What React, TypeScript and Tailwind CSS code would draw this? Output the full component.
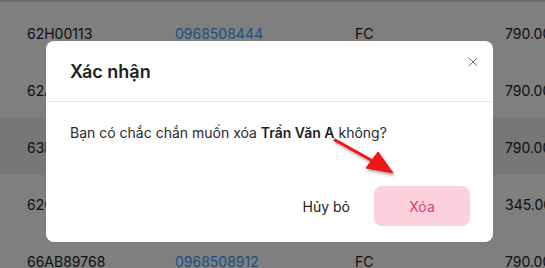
import React from 'react';
import { X } from 'lucide-react';

type Row = { plate: string; phone: string; type: string; amount: string };

const rows: Row[] = [
    { plate: '62H00113', phone: '0968508444', type: 'FC', amount: '790.000' },
    { plate: '62A12345', phone: '0968508555', type: 'FC', amount: '790.000' },
    { plate: '63B45678', phone: '0968508666', type: 'FC', amount: '790.000' },
    { plate: '62C98765', phone: '0968508777', type: 'PL', amount: '345.000' },
    { plate: '66AB89768', phone: '0968508912', type: 'FC', amount: '790.000' }
];

const App: React.FC = () => {
    return (
        <div
            className="relative h-[268px] w-[545px] overflow-hidden bg-white text-[14px] text-[#222]"
            style={{ fontFamily: 'Inter, "Noto Sans", sans-serif' }}
        >
            {/* Table behind the dialog */}
            <div className="h-[2px] bg-[#d9dbef]" />
            <div className="h-[2px]" />
            {rows.map((r, i) => (
                <div
                    key={r.plate}
                    className={`flex h-[57px] items-center pt-[2px] ${i === 2 ? 'bg-[#eeeeee]' : 'bg-white'}`}
                >
                    <div className="w-[175px] shrink-0 pl-[27px]">{r.plate}</div>
                    <div className="w-[180px] shrink-0 text-[#3d9fff]">{r.phone}</div>
                    <div className="w-[150px] shrink-0">{r.type}</div>
                    <div className="shrink-0 whitespace-nowrap">{r.amount}</div>
                </div>
            ))}

            {/* Backdrop + dialog */}
            <div className="absolute inset-0 bg-black/50 pl-[46px] pt-[41px]">
                <div className="flex h-[201px] w-[447px] flex-col rounded-lg bg-white">
                    <div className="flex h-[61px] items-center justify-between border-b border-[#e8e8e8] pl-6 pr-[10px]">
                        <span className="text-[18px] font-semibold text-[#1f1f1f]">Xác nhận</span>
                        <button className="-mt-[19px] flex h-5 w-5 items-center justify-center text-[#777]">
                            <X className="h-[16px] w-[16px]" strokeWidth={1.5} />
                        </button>
                    </div>
                    <div className="px-6 pt-[21px] leading-5 text-[#2a2a2a]">
                        Bạn có chắc chắn muốn xóa <span className="font-semibold text-[#1f1f1f]">Trần Văn A</span> không?
                    </div>
                    <div className="mt-auto flex items-center justify-end gap-2 pl-6 pr-[23px] pb-4">
                        <button className="h-10 px-[16px] text-[#222]">Hủy bỏ</button>
                        <button className="h-10 w-[96px] rounded-lg bg-[#fcd1dd] text-[#d63f6e]">Xóa</button>
                    </div>
                </div>
            </div>

            {/* Annotation arrow */}
            <svg className="pointer-events-none absolute left-0 top-0" width="545" height="268">
                <defs>
                    <filter id="sh" x="-20%" y="-20%" width="140%" height="140%">
                        <feDropShadow dx="1" dy="2" stdDeviation="1.5" floodColor="#000" floodOpacity="0.35" />
                    </filter>
                </defs>
                <g filter="url(#sh)" fill="#f21212" stroke="#f21212">
                    <line x1="335" y1="140" x2="378" y2="164" strokeWidth="3" strokeLinecap="round" />
                    <polygon points="393,173 366,168 378,152" strokeWidth="1" strokeLinejoin="round" />
                </g>
            </svg>
        </div>
    );
};

export default App;
